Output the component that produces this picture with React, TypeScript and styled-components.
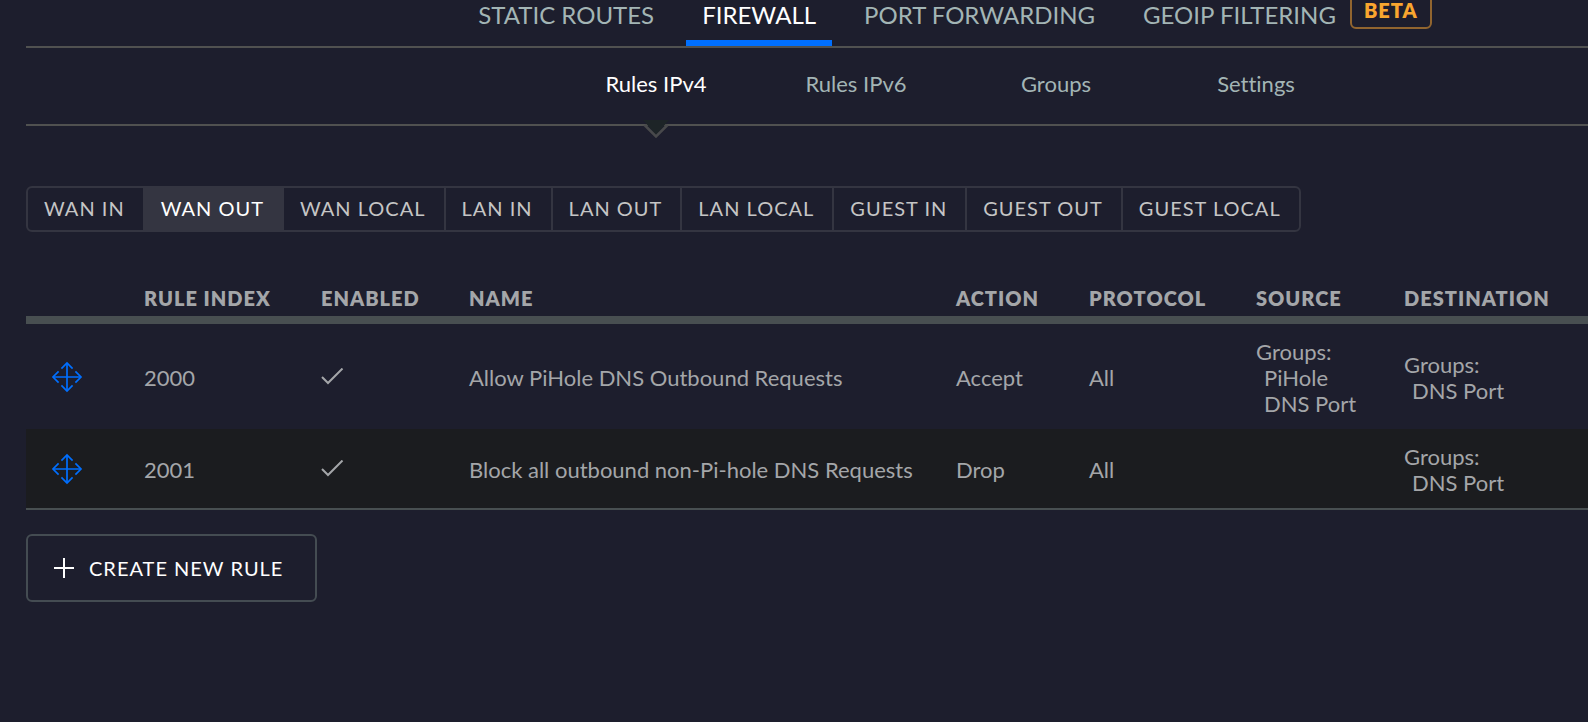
import React from "react";
import styled, { createGlobalStyle } from "styled-components";

const GlobalStyle = createGlobalStyle`
  *, *::before, *::after { box-sizing: border-box; }
  body {
    margin: 0;
    background: #1d1e2d;
    color: #a4a6a9;
    font-family: Lato, "Open Sans", sans-serif;
    font-size: 22px;
    line-height: 26px;
    font-variant-ligatures: none;
    overflow-x: hidden;
  }
  button { font-family: inherit; cursor: pointer; }
  a { text-decoration: none; }
`;

const Page = styled.main`
  padding-left: 26px;
`;

const TabBar = styled.nav`
  display: flex;
  justify-content: center;
  gap: 16px;
  padding-left: 296px;
  border-bottom: 2px solid #505150;
  white-space: nowrap;
`;

const Tab = styled.a<{ $active?: boolean }>`
  display: flex;
  align-items: flex-start;
  gap: 14px;
  padding: 0 16px 10px;
  border-bottom: 6px solid ${(p) => (p.$active ? "#006fff" : "transparent")};
  color: ${(p) => (p.$active ? "#ffffff" : "#a3b5b5")};
  font-size: 24px;
  line-height: 30px;
`;

const Badge = styled.span`
  margin-top: -7px;
  padding: 0 12px 2px;
  border: 2px solid #91652f;
  border-radius: 6px;
  color: #f9a62f;
  font-size: 20px;
  font-weight: 800;
  line-height: 30px;
  letter-spacing: 1px;
`;

const SubNav = styled.nav`
  display: flex;
  justify-content: center;
  padding-left: 298px;
  border-bottom: 2px solid #505150;
`;

const SubLink = styled.a<{ $active?: boolean }>`
  position: relative;
  width: 200px;
  padding: 23px 0 27px;
  color: ${(p) => (p.$active ? "#ffffff" : "#a3b5b5")};
  text-align: center;
`;

const Pointer = styled.svg`
  position: absolute;
  left: 50%;
  bottom: -14px;
  margin-left: -13px;
`;

const Segments = styled.div`
  display: inline-flex;
  margin-top: 60px;
  border: 2px solid #343541;
  border-radius: 6px;
  overflow: hidden;
`;

const Segment = styled.button<{ $active?: boolean }>`
  height: 42px;
  padding: 0 18px 2px 16px;
  border: 0;
  border-right: 2px solid #343541;
  background: ${(p) => (p.$active ? "#343541" : "transparent")};
  color: ${(p) => (p.$active ? "#ffffff" : "#c5c5c5")};
  font-size: 20px;
  line-height: 24px;
  letter-spacing: 1px;
  white-space: nowrap;

  &:last-child { border-right: 0; }
`;

const RuleTable = styled.table`
  width: 100%;
  margin-top: 54px;
  border-collapse: separate;
  border-spacing: 0;
  border-bottom: 2px solid #484f51;
  table-layout: fixed;
`;

const Col = styled.col<{ $w?: number }>`
  width: ${(p) => (p.$w ? `${p.$w}px` : "auto")};
`;

const HeadCell = styled.th`
  padding: 0 0 6px 24px;
  border-bottom: 8px solid #484f51;
  font-size: 20px;
  font-weight: 800;
  line-height: 24px;
  letter-spacing: 1px;
  text-align: left;
  white-space: nowrap;
`;

const Row = styled.tr`
  &:nth-child(even) { background: #1b1c1f; }
`;

const Cell = styled.td`
  padding: 15px 0 12px 24px;
  vertical-align: middle;

  svg { display: block; }
`;

const GroupList = styled.ul`
  margin: 0;
  padding: 0 0 0 8px;
  list-style: none;
`;

const DragHandle = styled.button`
  display: block;
  padding: 0 0 2px;
  border: 0;
  background: none;
  color: #006fff;
`;

const CreateButton = styled.button`
  display: flex;
  align-items: center;
  gap: 15px;
  height: 68px;
  margin-top: 24px;
  padding: 0 32px 0 26px;
  border: 2px solid #444c52;
  border-radius: 6px;
  background: none;
  color: #ffffff;
  font-size: 20px;
  line-height: 24px;
  letter-spacing: 1px;
`;

const MoveIcon = () => (
  <svg width="34" height="34" viewBox="0 0 34 34" fill="none" stroke="currentColor" strokeWidth="1.7" aria-hidden="true">
    <path d="M17 3v28M3 17h28" />
    <path d="M11.400 8.600 17 3l5.600 5.600M11.400 25.400 17 31l5.600-5.600M8.600 11.400 3 17l5.600 5.600M25.400 11.400 31 17l-5.600 5.600" />
  </svg>
);

const CheckIcon = () => (
  <svg width="24" height="20" viewBox="0 0 24 20" fill="none" stroke="currentColor" strokeWidth="2" role="img" aria-label="Enabled">
    <path d="M1 9l6 6L21.500 .5" />
  </svg>
);

const PlusIcon = () => (
  <svg width="20" height="20" viewBox="0 0 20 20" stroke="currentColor" strokeWidth="2" aria-hidden="true">
    <path d="M10 0v20M0 10h20" />
  </svg>
);

const chains = [
  "WAN IN", "WAN OUT", "WAN LOCAL", "LAN IN", "LAN OUT",
  "LAN LOCAL", "GUEST IN", "GUEST OUT", "GUEST LOCAL",
];

interface Rule {
  index: number;
  name: string;
  action: string;
  protocol: string;
  source: string[];
  destination: string[];
}

const rules: Rule[] = [
  {
    index: 2000,
    name: "Allow PiHole DNS Outbound Requests",
    action: "Accept",
    protocol: "All",
    source: ["PiHole", "DNS Port"],
    destination: ["DNS Port"],
  },
  {
    index: 2001,
    name: "Block all outbound non-Pi-hole DNS Requests",
    action: "Drop",
    protocol: "All",
    source: [],
    destination: ["DNS Port"],
  },
];

const Groups = ({ names }: { names: string[] }) =>
  names.length === 0 ? null : (
    <>
      Groups:
      <GroupList>
        {names.map((n) => (
          <li key={n}>{n}</li>
        ))}
      </GroupList>
    </>
  );

export default function App() {
  return (
    <>
      <GlobalStyle />
      <Page>
        <TabBar>
          <Tab href="#static-routes">STATIC ROUTES</Tab>
          <Tab href="#firewall" $active>FIREWALL</Tab>
          <Tab href="#port-forwarding">PORT FORWARDING</Tab>
          <Tab href="#geoip">
            GEOIP FILTERING
            <Badge>BETA</Badge>
          </Tab>
        </TabBar>
        <SubNav>
          <SubLink href="#ipv4" $active>
            Rules IPv4
            <Pointer width="26" height="18" viewBox="0 0 26 18" aria-hidden="true">
              <path d="M0 0h26L13 15z" fill="#1d2427" />
              <path d="M1.500 5 13 16.500 24.500 5" fill="none" stroke="#48494b" strokeWidth="2.500" />
            </Pointer>
          </SubLink>
          <SubLink href="#ipv6">Rules IPv6</SubLink>
          <SubLink href="#groups">Groups</SubLink>
          <SubLink href="#settings">Settings</SubLink>
        </SubNav>
        <Segments>
          {chains.map((c) => (
            <Segment key={c} type="button" $active={c === "WAN OUT"}>{c}</Segment>
          ))}
        </Segments>
        <RuleTable>
          <colgroup>
            <Col $w={94} />
            <Col $w={177} />
            <Col $w={148} />
            <Col />
            <Col $w={133} />
            <Col $w={167} />
            <Col $w={148} />
            <Col $w={208} />
          </colgroup>
          <thead>
            <tr>
              <HeadCell />
              <HeadCell scope="col">RULE INDEX</HeadCell>
              <HeadCell scope="col">ENABLED</HeadCell>
              <HeadCell scope="col">NAME</HeadCell>
              <HeadCell scope="col">ACTION</HeadCell>
              <HeadCell scope="col">PROTOCOL</HeadCell>
              <HeadCell scope="col">SOURCE</HeadCell>
              <HeadCell scope="col">DESTINATION</HeadCell>
            </tr>
          </thead>
          <tbody>
            {rules.map((r) => (
              <Row key={r.index}>
                <Cell>
                  <DragHandle type="button" aria-label={`Move rule ${r.index}`}>
                    <MoveIcon />
                  </DragHandle>
                </Cell>
                <Cell>{r.index}</Cell>
                <Cell><CheckIcon /></Cell>
                <Cell>{r.name}</Cell>
                <Cell>{r.action}</Cell>
                <Cell>{r.protocol}</Cell>
                <Cell><Groups names={r.source} /></Cell>
                <Cell><Groups names={r.destination} /></Cell>
              </Row>
            ))}
          </tbody>
        </RuleTable>
        <CreateButton type="button">
          <PlusIcon />
          CREATE NEW RULE
        </CreateButton>
      </Page>
    </>
  );
}
